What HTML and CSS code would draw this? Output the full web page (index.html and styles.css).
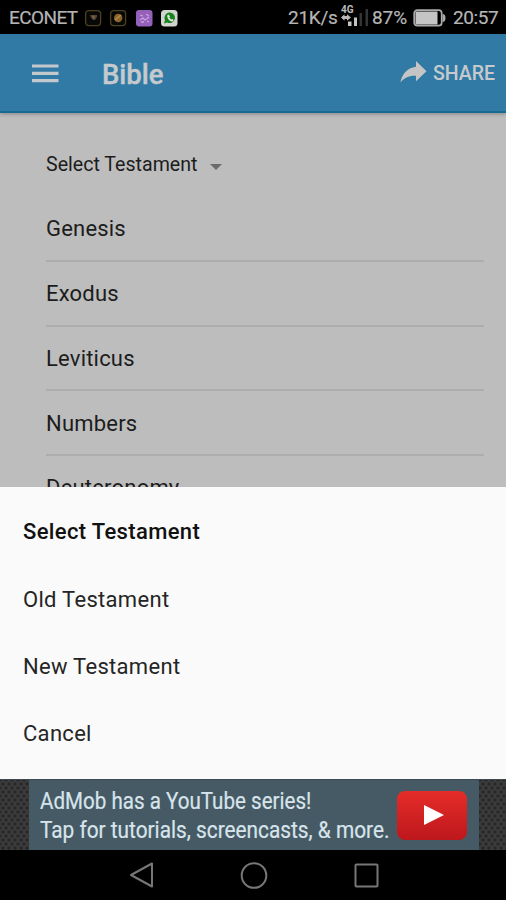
FILE: index.html
```
<!DOCTYPE html>
<html lang="en">
<head>
<meta charset="utf-8">
<title>Bible</title>
<link rel="stylesheet" href="styles.css">
</head>
<body>
<div class="phone">
  <div class="status">
    <span class="carrier">ECONET</span>
    <svg class="notes" width="94" height="18" viewBox="0 0 94 18">
      <rect x="1.6" y="1.6" width="15" height="15" rx="3" fill="#080806" stroke="#4b4022" stroke-width="1.3"/>
      <path d="M6 6h7v2l-2 3H9L7 8.500z" fill="#4e4438"/><circle cx="9.500" cy="8" r="1.500" fill="#7b6043"/>
      <rect x="26.600" y="1.600" width="15" height="15" rx="3" fill="#080806" stroke="#4b4022" stroke-width="1.3"/>
      <circle cx="34.200" cy="9" r="4.200" fill="#8a642c"/><path d="M31 11l6-5" stroke="#b58b49" stroke-width="1.500"/>
      <rect x="52" y="1" width="16.500" height="16.500" rx="3" fill="#9560b9"/>
      <path d="M56 6l3 1M62 5l3 2M56 11l3-2 2 2 4-3M57 13h3M63 12l2 1" stroke="#c9a3dd" stroke-width="1.300" fill="none"/>
      <rect x="77" y="1" width="16.500" height="16.500" rx="3.500" fill="#d2d4d0"/>
      <path d="M80 14.500l1-3.300a5.300 5.300 0 1 1 2.300 2.300z" fill="#17821c"/>
      <path d="M83.300 6.300l1.500-.7 1.200 2-.8 1 2 1.900 1.100-.6 1.500 1.300-1.300 1.300c-2.700.3-5.700-3-5.200-6.200z" fill="#e1e8df"/>
    </svg>
    <span class="speed">21K/s</span>
    <svg class="signal" width="29" height="24" viewBox="0 0 29 24">
      <text x="0" y="9" class="net">4G</text>
      <path d="M0 13.500l3.500-3.300V12h2.500v-1.800l4 3.300-4 3.300V15H3.500v1.800z" fill="#b9b9b9"/>
      <path d="M7 17.500h3.500V22H7zM13 13.500h3V22h-3z" fill="#c4c4c4"/>
      <path d="M18.500 9H21v13h-2.500zM24.500 5H27v17h-2.500z" fill="#353535"/>
    </svg>
    <span class="pct">87%</span>
    <svg class="battery" width="33" height="18" viewBox="0 0 33 18">
      <rect x="1.200" y="1.200" width="27.500" height="15.500" rx="3" fill="none" stroke="#aaa" stroke-width="1.700"/>
      <rect x="2.500" y="2.500" width="22" height="13" fill="#c5c5c5"/>
      <path d="M29.500 5q3 0 3 4t-3 4z" fill="#aaa"/>
    </svg>
    <span class="clock">20:57</span>
  </div>
  <header class="bar">
    <svg class="menu" width="27" height="19" viewBox="0 0 27 19"><path d="M0 2h26.500M0 9.300h26.500M0 16.600h26.500" stroke="#c3c8cd" stroke-width="3.200"/></svg>
    <h1 class="title">Bible</h1>
    <svg class="arrow" width="27" height="22" viewBox="0 0 27 22"><path d="M16 0L26.500 10.200 16 20.300V14.700C9 14.300 4.500 16.500.3 21.500 2.200 13.500 6.500 7 16 5.800z" fill="#c5c5c5"/></svg>
    <span class="share">SHARE</span>
  </header>
  <main class="page">
    <div class="select"><span class="select-text">Select Testament</span><i class="caret"></i></div>
    <ul class="books">
      <li><span>Genesis</span></li>
      <li><span>Exodus</span></li>
      <li><span>Leviticus</span></li>
      <li><span>Numbers</span></li>
      <li><span>Deuteronomy</span></li>
    </ul>
  </main>
  <section class="sheet">
    <div class="row heading"><span>Select Testament</span></div>
    <div class="row"><span>Old Testament</span></div>
    <div class="row"><span>New Testament</span></div>
    <div class="row"><span>Cancel</span></div>
  </section>
  <div class="ad">
    <div class="banner">
      <p class="copy"><span class="line1">AdMob has a YouTube series!</span><br><span class="line2">Tap for tutorials, screencasts, &amp; more.</span></p>
      <div class="play"><svg width="20" height="20" viewBox="0 0 20 20"><path d="M0 0l20 10L0 20z" fill="#fff"/></svg></div>
    </div>
  </div>
  <nav class="nav">
    <svg width="252" height="30" viewBox="0 0 252 30" fill="none" stroke="#777" stroke-width="2" stroke-linejoin="round">
      <path d="M3 15L24 3.500v23z"/><circle cx="126" cy="15.500" r="12.300"/><rect x="227.500" y="4.500" width="22" height="22" rx="1"/>
    </svg>
  </nav>
</div>
</body>
</html>
```

FILE: styles.css
```
* { box-sizing: border-box; }
body { margin: 0; font-family: Roboto, "Liberation Sans", sans-serif; background: #000; }
.phone { width: 506px; height: 900px; display: flex; flex-direction: column; overflow: hidden; }
.status { height: 34px; flex: none; background: #000; color: #b5b5b5; display: flex; align-items: center; padding: 2px 6px 0 9px; font-size: 19px; line-height: 34px; white-space: nowrap; }
.carrier { width: 75px; font-size: 19px; letter-spacing: -.6px; -webkit-text-stroke: .2px; }
.notes { margin-bottom: 1px; }
.speed { margin-left: 110px; width: 53px; letter-spacing: -.3px; -webkit-text-stroke: .2px; }
.signal { margin: -4px 2px 0 0; }
.net { font: bold 10px Roboto, sans-serif; fill: #bbb; }
.pct { width: 41px; letter-spacing: -.1px; -webkit-text-stroke: .2px; }
.battery { margin-right: 7px; }
.clock { letter-spacing: -.4px; -webkit-text-stroke: .2px; }
.bar { height: 79px; flex: none; background: #307aa5; border-bottom: 2px solid #176b91; box-shadow: 0 1px 4px rgba(0,0,0,.3); display: flex; align-items: center; padding: 2px 10px 0 32px; position: relative; color: #c6cacd; }
.title { margin: 2px auto 0 43px; font-size: 27.5px; font-weight: 500; line-height: 40px; -webkit-text-stroke: .4px; }
.arrow { margin: -4px 6px 0 0; }
.share { font-size: 19.5px; font-weight: 500; width: 63px; white-space: nowrap; }
.page { height: 374px; flex: none; overflow: hidden; background: #bdbdbd; padding: 31px 22px 0 46px; color: #1c1c1c; }
.select { height: 40px; display: flex; align-items: center; font-size: 19.6px; }
.caret { margin: 5px 0 0 13px; border: 6.5px solid transparent; border-top-color: #6a6a6a; border-bottom: 0; }
.books { list-style: none; margin: 13px 0 0; padding: 0; }
.books li { height: 64.75px; display: flex; align-items: center; padding-top: 1px; border-bottom: 2px solid #adadad; font-size: 22px; letter-spacing: .2px; }
.sheet { height: 292px; flex: none; background: #fafafa; padding: 11px 23px; color: #252525; }
.row { height: 67.4px; display: flex; align-items: center; font-size: 22px; letter-spacing: .3px; }
.heading { font-weight: 500; color: #111; letter-spacing: .35px; }
.ad { height: 71px; flex: none; display: flex; justify-content: center; border-top: 1px solid #3f4a50; background-color: #3c3c3c; background-image: radial-gradient(circle, #292929 1.4px, transparent 2px), radial-gradient(circle, #292929 1.4px, transparent 2px); background-size: 6px 8px; background-position: 0 0, 3px 4px; }
.banner { width: 450px; margin-left: 1px; background: #455a64; padding: 2px 12px 0 11px; display: flex; align-items: center; justify-content: space-between; }
.copy { width: 350px; margin: 0; color: #d8e4ec; font-size: 23px; line-height: 29.5px; white-space: nowrap; }
.copy span { display: inline-block; transform: scaleX(.905); transform-origin: left; -webkit-text-stroke: .2px; }
.copy .line1 { transform: scaleX(.895); }
.play { width: 70px; height: 49px; flex: none; margin-top: -2px; border-radius: 8px; background: linear-gradient(#e52d29, #bd171c); display: flex; align-items: center; justify-content: center; padding-left: 4px; }
.nav { height: 50px; flex: none; display: flex; align-items: center; padding-left: 128px; background: #000; }
```
